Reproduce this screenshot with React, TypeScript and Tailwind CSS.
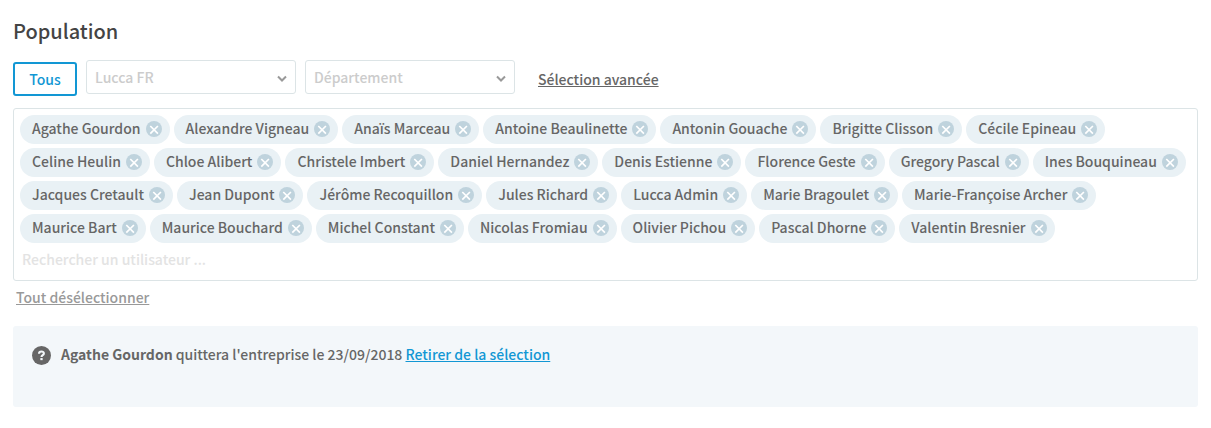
import { useState } from 'react';

const initialUsers = [
  'Agathe Gourdon',
  'Alexandre Vigneau',
  'Anaïs Marceau',
  'Antoine Beaulinette',
  'Antonin Gouache',
  'Brigitte Clisson',
  'Cécile Epineau',
  'Celine Heulin',
  'Chloe Alibert',
  'Christele Imbert',
  'Daniel Hernandez',
  'Denis Estienne',
  'Florence Geste',
  'Gregory Pascal',
  'Ines Bouquineau',
  'Jacques Cretault',
  'Jean Dupont',
  'Jérôme Recoquillon',
  'Jules Richard',
  'Lucca Admin',
  'Marie Bragoulet',
  'Marie-Françoise Archer',
  'Maurice Bart',
  'Maurice Bouchard',
  'Michel Constant',
  'Nicolas Fromiau',
  'Olivier Pichou',
  'Pascal Dhorne',
  'Valentin Bresnier',
];

function FilterSelect({ label, option }: { label: string; option: string }) {
  return (
    <div className="relative w-[210px]">
      <select
        aria-label={label}
        className="block h-[34px] w-full appearance-none rounded-[3px] border border-[#dce4e6] bg-white pl-2 pr-8 font-medium text-[#cccccc]"
      >
        <option>{option}</option>
      </select>
      <svg
        viewBox="0 0 10 8"
        className="pointer-events-none absolute right-[9px] top-[15px] h-2 w-[10px]"
        fill="none"
        stroke="#999999"
        strokeWidth="2"
      >
        <path d="M1 1.5 L5 5.5 L9 1.5" />
      </svg>
    </div>
  );
}

function UserChip({ name, onRemove }: { name: string; onRemove: () => void }) {
  return (
    <li className="flex h-[29px] items-center gap-[5px] rounded-full bg-[#e9f1f5] pb-px pl-3 pr-2">
      <span className="pb-[2px]">{name}</span>
      <button type="button" aria-label={`Retirer ${name}`} onClick={onRemove} className="cursor-pointer">
        <svg viewBox="0 0 16 16" className="block size-4">
          <circle cx="8" cy="8" r="8" fill="#bfd3dd" />
          <path d="M4.3 5 L11.9 12.6 M11.9 5 L4.3 12.6" stroke="#ffffff" strokeWidth="1.7" />
        </svg>
      </button>
    </li>
  );
}

export default function App() {
  const [users, setUsers] = useState(initialUsers);

  const remove = (name: string) => setUsers(users.filter((user) => user !== name));

  return (
    <main className="bg-white px-[13px] pt-[19px] pb-5 font-['Noto_Sans_CJK_SC','Source_Sans_Pro',sans-serif] text-[14px] font-medium leading-6 text-[#666666]">
      <h1 className="text-[20px] font-medium leading-6 text-[#444444]">Population</h1>

      {/* Filters */}
      <div className="mt-[17px] flex items-start gap-[9px]">
        <button
          type="button"
          onClick={() => setUsers(initialUsers)}
          className="mt-[2px] h-[34px] w-16 cursor-pointer rounded-[3px] border-2 border-[#1297d4] text-[#1297d4]"
        >
          Tous
        </button>
        <FilterSelect label="Établissement" option="Lucca FR" />
        <FilterSelect label="Département" option="Département" />
        <a href="#" className="ml-[14px] mt-[7px] underline">
          Sélection avancée
        </a>
      </div>

      {/* Selected users */}
      <div className="mt-3 rounded-[3px] border border-[#dce4e6] px-[6px] pt-[6px] pb-[9px]">
        <ul className="flex flex-wrap gap-1">
          {users.map((name) => (
            <UserChip key={name} name={name} onRemove={() => remove(name)} />
          ))}
        </ul>
        <input
          type="text"
          aria-label="Rechercher un utilisateur"
          placeholder="Rechercher un utilisateur ..."
          className="mt-1 block h-6 w-full px-[2px] outline-none placeholder:text-[#e3e3e3]"
        />
      </div>
      <button
        type="button"
        onClick={() => setUsers([])}
        className="ml-[3px] mt-1 block cursor-pointer text-[#999999] underline"
      >
        Tout désélectionner
      </button>

      {/* Departure notice */}
      <div className="mt-[17px] flex min-h-[81px] items-start gap-[10px] rounded-[3px] bg-[#f3f7fa] px-[19px] py-4">
        <svg viewBox="0 0 20 20" className="mt-1 size-[19px] shrink-0">
          <circle cx="10" cy="10" r="10" fill="#666666" />
          <path
            d="M7.4 8.1 C7.4 4.9 12.7 5 12.5 8 C12.4 9.8 10 9.6 10 11.6"
            fill="none"
            stroke="#f3f7fa"
            strokeWidth="2.2"
          />
          <rect x="8.8" y="12.7" width="2.4" height="2.2" fill="#f3f7fa" />
        </svg>
        <p>
          <strong className="font-bold">Agathe Gourdon</strong> quittera l'entreprise le 23/09/2018{' '}
          <a href="#" className="text-[#1297d4] underline">
            Retirer de la sélection
          </a>
        </p>
      </div>
    </main>
  );
}
